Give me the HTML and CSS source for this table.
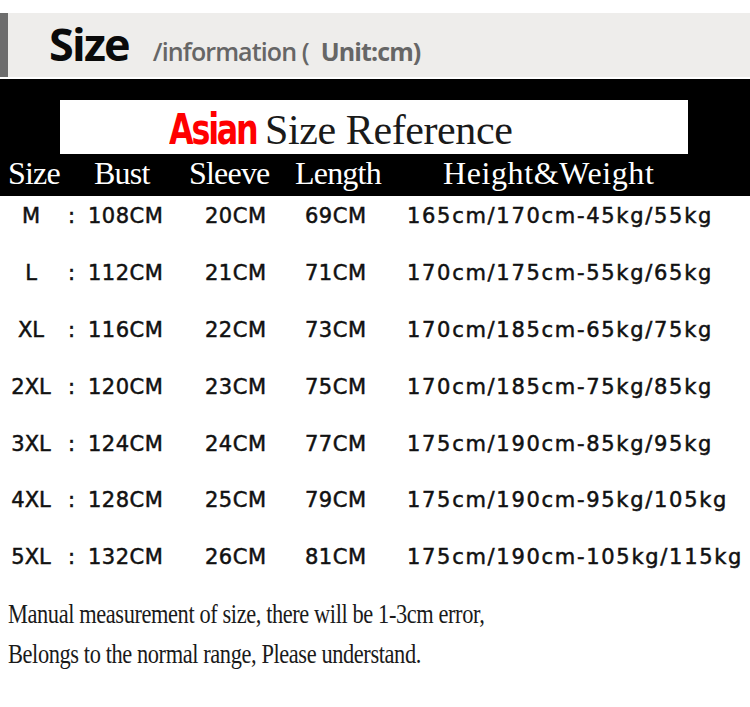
FILE: index.html
```html
<!DOCTYPE html>
<html>
<head>
<meta charset="utf-8">
<link rel="stylesheet" href="styles.css">
</head>
<body>
<div class="page">
  <div class="title-band">
    <span class="title-main">Size</span>
    <span class="title-sub">/information (<span class="unit">Unit:cm)</span></span>
  </div>
  <div class="chart-head">
    <div class="ref-box"><span class="asian">Asian</span><span class="ref-text">Size Reference</span></div>
    <div class="head-row">
      <span class="h-size">Size</span>
      <span class="h-bust">Bust</span>
      <span class="h-sleeve">Sleeve</span>
      <span class="h-length">Length</span>
      <span class="h-hw">Height&amp;Weight</span>
    </div>
  </div>
  <div class="rows">
    <div class="row"><span class="c-size">M</span><span class="c-colon">:</span><span class="c-bust">108CM</span><span class="c-sleeve">20CM</span><span class="c-length">69CM</span><span class="c-hw">165cm/170cm-45kg/55kg</span></div>
    <div class="row"><span class="c-size">L</span><span class="c-colon">:</span><span class="c-bust">112CM</span><span class="c-sleeve">21CM</span><span class="c-length">71CM</span><span class="c-hw">170cm/175cm-55kg/65kg</span></div>
    <div class="row"><span class="c-size">XL</span><span class="c-colon">:</span><span class="c-bust">116CM</span><span class="c-sleeve">22CM</span><span class="c-length">73CM</span><span class="c-hw">170cm/185cm-65kg/75kg</span></div>
    <div class="row"><span class="c-size">2XL</span><span class="c-colon">:</span><span class="c-bust">120CM</span><span class="c-sleeve">23CM</span><span class="c-length">75CM</span><span class="c-hw">170cm/185cm-75kg/85kg</span></div>
    <div class="row"><span class="c-size">3XL</span><span class="c-colon">:</span><span class="c-bust">124CM</span><span class="c-sleeve">24CM</span><span class="c-length">77CM</span><span class="c-hw">175cm/190cm-85kg/95kg</span></div>
    <div class="row"><span class="c-size">4XL</span><span class="c-colon">:</span><span class="c-bust">128CM</span><span class="c-sleeve">25CM</span><span class="c-length">79CM</span><span class="c-hw">175cm/190cm-95kg/105kg</span></div>
    <div class="row"><span class="c-size">5XL</span><span class="c-colon">:</span><span class="c-bust">132CM</span><span class="c-sleeve">26CM</span><span class="c-length">81CM</span><span class="c-hw">175cm/190cm-105kg/115kg</span></div>
  </div>
  <div class="note">
    <p>Manual measurement of size, there will be 1-3cm error,</p>
    <p>Belongs to the normal range, Please understand.</p>
  </div>
</div>
</body>
</html>
```

FILE: styles.css
```css
html, body {
  margin: 0;
  padding: 0;
  background: #ffffff;
}
.page {
  width: 750px;
  height: 707px;
  overflow: hidden;
  padding-top: 13px;
  box-sizing: border-box;
}
.title-band {
  height: 64px;
  background: #eeedeb;
  border-left: 8px solid #6d6d6d;
  box-sizing: border-box;
  display: flex;
  align-items: baseline;
  padding-left: 41px;
  line-height: 62px;
}
.title-main {
  font-family: "Open Sans", sans-serif;
  font-weight: 700;
  font-size: 45px;
  letter-spacing: -1.8px;
  color: #0a0a0a;
}
.title-sub {
  font-family: "Open Sans", sans-serif;
  font-weight: 600;
  font-size: 25px;
  color: #666666;
  margin-left: 24px;
  letter-spacing: -0.9px;
}
.unit {
  font-weight: 700;
  margin-left: 12px;
}
.chart-head {
  margin-top: 2px;
  background: #000000;
  padding-top: 21px;
}
.ref-box {
  margin-left: 60px;
  width: 628px;
  height: 54px;
  background: #ffffff;
  display: flex;
  justify-content: flex-start;
  align-items: baseline;
  line-height: 58px;
  padding-left: 109px;
  box-sizing: border-box;
}
.asian {
  font-family: "DejaVu Sans", sans-serif;
  font-weight: 700;
  font-size: 43px;
  color: #ff0000;
  letter-spacing: -3px;
  display: inline-block;
  width: 88px;
  white-space: nowrap;
  transform: scaleX(0.74);
  transform-origin: left center;
  margin-right: 8px;
}
.ref-text {
  font-family: "Liberation Serif", serif;
  font-size: 42px;
  color: #1a1a1a;
  letter-spacing: -0.4px;
}
.head-row {
  height: 42px;
  display: grid;
  grid-template-columns: 86px 95px 106px 148px auto;
  padding-left: 8px;
  font-family: "Liberation Serif", serif;
  font-size: 32px;
  color: #ffffff;
  line-height: 38px;
  letter-spacing: -0.8px;
}
.h-hw {
  letter-spacing: 0.6px;
}
.rows {
  font-family: "DejaVu Sans", sans-serif;
  font-weight: 400;
  font-size: 21px;
  color: #111111;
  -webkit-text-stroke: 0.5px #111111;
}
.row {
  height: 56.9px;
  box-sizing: border-box;
  padding-top: 8px;
  line-height: 24px;
  display: grid;
  grid-template-columns: 62px 26px 117px 100px 102px auto;
  letter-spacing: 0.5px;
}
.c-size {
  text-align: center;
  letter-spacing: 0;
}
.c-colon {
  padding-left: 6px;
}
.c-hw {
  letter-spacing: 1.7px;
  white-space: nowrap;
}
.note {
  padding-left: 8px;
  font-family: "Liberation Serif", serif;
  font-size: 28px;
  color: #1a1a1a;
  letter-spacing: -0.5px;
}
.note p {
  margin: 0;
  line-height: 40px;
  white-space: nowrap;
  transform: scaleX(0.8);
  transform-origin: left center;
}
```
